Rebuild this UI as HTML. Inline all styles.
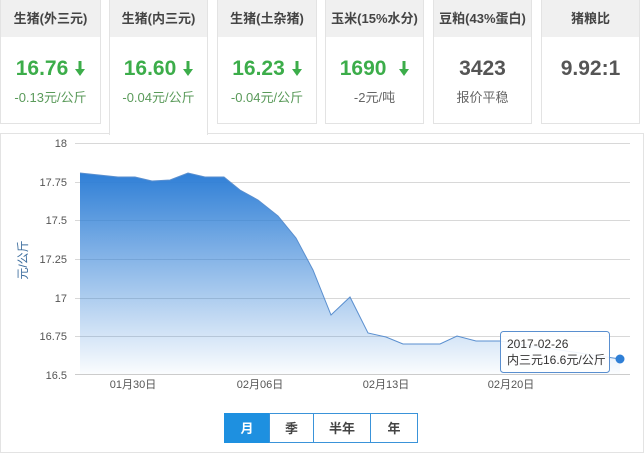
<!DOCTYPE html><html><head><meta charset="utf-8"><style>
body{margin:0;width:644px;height:443px;background:#fff;font-family:"Liberation Sans","Noto Sans CJK SC",sans-serif;position:relative;overflow:hidden}
.c{position:absolute;top:0;height:124px;border:1px solid #e3e3e3;border-top:none;box-sizing:border-box;background:#fff;text-align:center}
.h{height:37px;background:#f0f0f0;font-size:13px;font-weight:bold;color:#444;line-height:37px}
.n{font-size:21px;font-weight:bold;color:#3cad4a;margin-top:17px;height:30px;line-height:30px}
.g{color:#555}
.s{font-size:13px;color:#5a9a5a;margin-top:3px}
.s2{color:#666}
.ar{display:inline-block;margin-left:7px;vertical-align:-1px}
.panel{position:absolute;left:0;top:133px;width:644px;height:320px;border:1px solid #e3e3e3;box-sizing:border-box}
.btn{position:absolute;top:413px;height:30px;border:1px solid #3a93d9;box-sizing:border-box;font-size:13px;font-weight:bold;color:#444;text-align:center;line-height:30px;background:#fff}
</style></head><body>
<div class="panel"></div>
<div class="c" style="left:0;width:101px"><div class="h">生猪(外三元)</div><div class="n">16.76<svg class="ar" width="10" height="15" viewBox="0 0 10 15"><path d="M3.5,0H6.5V8H10L5,15L0,8H3.5Z" fill="#3cad4a"/></svg></div><div class="s">-0.13元/公斤</div></div>
<div class="c" style="left:109px;width:99px;height:135px;border-bottom:none"><div class="h">生猪(内三元)</div><div class="n">16.60<svg class="ar" width="10" height="15" viewBox="0 0 10 15"><path d="M3.5,0H6.5V8H10L5,15L0,8H3.5Z" fill="#3cad4a"/></svg></div><div class="s">-0.04元/公斤</div></div>
<div class="c" style="left:217px;width:100px"><div class="h">生猪(土杂猪)</div><div class="n">16.23<svg class="ar" width="10" height="15" viewBox="0 0 10 15"><path d="M3.5,0H6.5V8H10L5,15L0,8H3.5Z" fill="#3cad4a"/></svg></div><div class="s">-0.04元/公斤</div></div>
<div class="c" style="left:325px;width:99px"><div class="h">玉米(15%水分)</div><div class="n">1690 <svg class="ar" width="10" height="15" viewBox="0 0 10 15"><path d="M3.5,0H6.5V8H10L5,15L0,8H3.5Z" fill="#3cad4a"/></svg></div><div class="s s2">-2元/吨</div></div>
<div class="c" style="left:433px;width:99px"><div class="h">豆粕(43%蛋白)</div><div class="n g">3423</div><div class="s s2">报价平稳</div></div>
<div class="c" style="left:541px;width:99px"><div class="h">猪粮比</div><div class="n g">9.92:1</div></div>
<svg width="644" height="443" style="position:absolute;left:0;top:0">
<defs><linearGradient id="gr" x1="0" y1="0" x2="0" y2="1"><stop offset="0" stop-color="#2f7fd6"/><stop offset="1" stop-color="#2f7fd6" stop-opacity="0.02"/></linearGradient></defs>
<g stroke="#d8d8d8" stroke-width="1">
<line x1="75" x2="630" y1="143.5" y2="143.5"/><line x1="75" x2="630" y1="182.5" y2="182.5"/><line x1="75" x2="630" y1="220.5" y2="220.5"/><line x1="75" x2="630" y1="259.5" y2="259.5"/><line x1="75" x2="630" y1="298.5" y2="298.5"/><line x1="75" x2="630" y1="336.5" y2="336.5"/><line x1="75" x2="630" y1="374.5" y2="374.5" stroke="#ccc"/>
</g>
<path d="M80,173 L118,177 L135,177 L152,181 L170,180 L188,173 L205,177 L224,177 L240,190 L258,200 L278,216 L296,238 L313,270 L331,315 L350,297 L368,333 L386,337 L403,344 L440,344 L457,336 L476,341 L500,341 L620,359 L620,374 L80,374Z" fill="url(#gr)" stroke="none"/>
<path d="M80,173 L118,177 L135,177 L152,181 L170,180 L188,173 L205,177 L224,177 L240,190 L258,200 L278,216 L296,238 L313,270 L331,315 L350,297 L368,333 L386,337 L403,344 L440,344 L457,336 L476,341 L500,341 L620,359" fill="none" stroke="#5a8fcf" stroke-width="1"/>
<g font-size="11" fill="#555" text-anchor="end" font-family="Liberation Sans">
<text x="67" y="147">18</text><text x="67" y="186">17.75</text><text x="67" y="224">17.5</text><text x="67" y="263">17.25</text><text x="67" y="302">17</text><text x="67" y="340">16.75</text><text x="67" y="379">16.5</text></g>
<text transform="translate(27,260) rotate(-90)" text-anchor="middle" font-size="12" fill="#3f6f9f" font-family="Liberation Sans,Noto Sans CJK SC">元/公斤</text>
<g font-size="11" fill="#555" text-anchor="middle" font-family="Liberation Sans,Noto Sans CJK SC">
<text x="133" y="388">01月30日</text><text x="260" y="388">02月06日</text><text x="386" y="388">02月13日</text><text x="511" y="388">02月20日</text></g>
<rect x="500.5" y="331.5" width="109" height="41" rx="3" fill="#fff" fill-opacity="0.9" stroke="#5a8fcf"/>
<text x="507" y="348" font-size="12" fill="#333" font-family="Liberation Sans">2017-02-26</text>
<text x="507" y="364" font-size="12" fill="#333" font-family="Liberation Sans,Noto Sans CJK SC">内三元16.6元/公斤</text>
<circle cx="620" cy="359" r="4.5" fill="#2f7fd6"/>
</svg>
<div class="btn" style="left:224px;width:46px;background:#1e90e0;color:#fff;border-color:#1e90e0">月</div>
<div class="btn" style="left:269px;width:45px">季</div>
<div class="btn" style="left:313px;width:58px">半年</div>
<div class="btn" style="left:370px;width:48px">年</div>
</body></html>
